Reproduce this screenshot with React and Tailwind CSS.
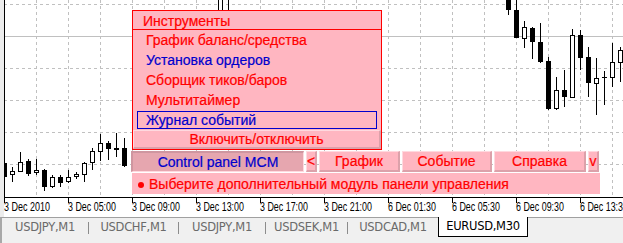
const CANDLES = [
  { x: 4, hi: 158, lo: 180, t: 163, b: 177, up: false },
  { x: 12, hi: 167, lo: 182, t: 171, b: 175, up: true },
  { x: 20, hi: 152, lo: 172, t: 162, b: 172, up: true },
  { x: 28, hi: 159, lo: 176, t: 161, b: 174, up: false },
  { x: 36, hi: 159, lo: 175, t: 170, b: 173, up: true },
  { x: 44, hi: 169, lo: 191, t: 170, b: 187, up: false },
  { x: 52, hi: 175, lo: 188, t: 177, b: 187, up: true },
  { x: 60, hi: 175, lo: 187, t: 177, b: 183, up: false },
  { x: 68, hi: 170, lo: 183, t: 177, b: 182, up: true },
  { x: 76, hi: 172, lo: 179, t: 174, b: 177, up: true },
  { x: 84, hi: 162, lo: 182, t: 163, b: 175, up: true },
  { x: 92, hi: 148, lo: 170, t: 151, b: 163, up: true },
  { x: 100, hi: 134, lo: 161, t: 143, b: 152, up: true },
  { x: 108, hi: 141, lo: 160, t: 143, b: 149, up: false },
  { x: 116, hi: 133, lo: 157, t: 148, b: 150, up: false },
  { x: 124, hi: 138, lo: 167, t: 148, b: 166, up: false },
  { x: 220, hi: -5, lo: 14, t: -5, b: 13, up: true },
  { x: 228, hi: -5, lo: 14, t: -20, b: -10, up: false },
  { x: 508, hi: -5, lo: 15, t: -5, b: 10, up: false },
  { x: 516, hi: -5, lo: 38, t: 10, b: 38, up: false },
  { x: 524, hi: 21, lo: 48, t: 27, b: 39, up: true },
  { x: 532, hi: 27, lo: 59, t: 28, b: 42, up: false },
  { x: 540, hi: 23, lo: 63, t: 42, b: 62, up: false },
  { x: 548, hi: 57, lo: 110, t: 61, b: 109, up: false },
  { x: 556, hi: 77, lo: 110, t: 90, b: 109, up: true },
  { x: 564, hi: 70, lo: 107, t: 90, b: 97, up: false },
  { x: 572, hi: 29, lo: 97, t: 35, b: 98, up: true },
  { x: 580, hi: 30, lo: 70, t: 35, b: 58, up: false },
  { x: 588, hi: 47, lo: 97, t: 57, b: 83, up: false },
  { x: 596, hi: 58, lo: 115, t: 78, b: 84, up: true },
  { x: 604, hi: 71, lo: 105, t: 77, b: 78, up: false },
  { x: 612, hi: 43, lo: 87, t: 62, b: 78, up: true },
  { x: 620, hi: 47, lo: 82, t: 50, b: 63, up: true },
];

const TICKS = [
  [4, '3 Dec 2010', 46],
  [68, '3 Dec 05:00', 48],
  [132, '3 Dec 09:00', 48],
  [196, '3 Dec 13:00', 48],
  [260, '3 Dec 17:00', 48],
  [324, '3 Dec 21:00', 48],
  [388, '6 Dec 01:30', 48],
  [452, '6 Dec 05:30', 48],
  [516, '6 Dec 09:30', 48],
  [580, '6 Dec 13:30', 48],
];

const GRID_X = Array.from({ length: 19 }, (_, i) => 36 + i * 32);
const GRID_Y = [4, 68, 100, 132, 164];

const TABS = [
  { name: 'USDJPY,M1', w: 'w-[86px]' },
  { name: 'USDCHF,M1', w: 'w-[89px]' },
  { name: 'USDJPY,M1', w: 'w-[86px]' },
  { name: 'USDSEK,M1', w: 'w-[81px]' },
  { name: 'USDCAD,M1', w: 'w-[90px]' },
];

const FONT = "font-['Liberation_Sans',Arial,sans-serif]";

function Chart() {
  return (
    <svg width="623" height="217" className="block">
      <rect x="0" y="0" width="623" height="217" fill="#fff" />
      {GRID_X.map((x) => (
        <line key={'gx' + x} x1={x + 0.5} y1={0} x2={x + 0.5} y2={197} stroke="#c0c0c0" strokeDasharray="3 3" />
      ))}
      {GRID_Y.map((y) => (
        <line key={'gy' + y} x1={4} y1={y + 0.5} x2={623} y2={y + 0.5} stroke="#c0c0c0" strokeDasharray="3 3" />
      ))}
      <line x1={4} y1={36.5} x2={623} y2={36.5} stroke="#c0c0c0" />

      {CANDLES.map((c) => (
        <g key={c.x}>
          <line x1={c.x + 0.5} x2={c.x + 0.5} y1={c.hi} y2={c.lo} stroke="#000" />
          {c.up ? (
            <rect x={c.x - 1.5} y={c.t + 0.5} width={4} height={Math.max(c.b - c.t - 1, 0)} fill="#fff" stroke="#000" />
          ) : (
            <rect x={c.x - 2} y={c.t} width={5} height={Math.max(c.b - c.t, 1)} fill="#000" />
          )}
        </g>
      ))}

      <line x1={4.5} y1={0} x2={4.5} y2={197} stroke="#000" />
      <line x1={4} y1={197.5} x2={623} y2={197.5} stroke="#000" />
      {TICKS.map(([x, label, len]) => (
        <g key={label}>
          <line x1={x + 0.5} y1={197} x2={x + 0.5} y2={203} stroke="#000" />
          <text
            x={x}
            y={211}
            fontFamily="'Liberation Sans', Arial, sans-serif"
            fontSize="12"
            textLength={len}
            lengthAdjust="spacingAndGlyphs"
            fill="#000"
          >
            {label}
          </text>
        </g>
      ))}
      <rect x="0" y="0" width="4" height="217" fill="#ececec" />
    </svg>
  );
}

function Btn({ w, pressed, children }) {
  return (
    <div
      className={
        pressed
          ? `${w} h-[21px] flex items-center justify-center bg-[#e6a6af] border-t-2 border-l-2 border-b border-r border-t-[#cf96a0] border-l-[#cf96a0] border-b-[#ffd9df] border-r-[#ffd9df] text-[#0000cd] text-[14px] leading-none`
          : `${w} h-[21px] flex items-center justify-center bg-[#ffb6c1] border-t border-l border-b-2 border-r-2 border-t-[#ffd9df] border-l-[#ffd9df] border-b-[#dca1aa] border-r-[#dca1aa] text-[#ff0000] text-[14px] leading-none`
      }
    >
      {children}
    </div>
  );
}

export default function App() {
  return (
    <div className={`w-[623px] h-[243px] overflow-hidden bg-white ${FONT}`}>
      <div className="relative h-[217px]">
        <Chart />

        <div className="absolute left-[132px] top-[10px] w-[250px] border border-[#ff0000] bg-[#ffb6c1] text-[14px] [-webkit-text-stroke:0.2px]">
          <div className="h-[19px] pt-[2px] pl-[10px] leading-[17px] text-[#ff0000] border-b border-[#ff0000]">
            Инструменты
          </div>
          <div className="h-[20px] pl-[13px] leading-[20px] text-[#ff0000]">График баланс/средства</div>
          <div className="h-[20px] pl-[13px] leading-[20px] text-[#0000cd]">Установка ордеров</div>
          <div className="h-[20px] pl-[13px] leading-[20px] text-[#ff0000]">Сборщик тиков/баров</div>
          <div className="h-[20px] pl-[13px] leading-[20px] text-[#ff0000]">Мультитаймер</div>
          <div className="h-[20px] px-[4px] pt-px">
            <div className="h-[18px] border border-[#0000cd] pl-[8px] leading-[16px] text-[#0000cd]">Журнал событий</div>
          </div>
          <div className="h-[19px] flex items-center justify-center border-t border-l border-b-2 border-r-2 border-t-[#ffd9df] border-l-[#ffd9df] border-b-[#dca1aa] border-r-[#dca1aa] text-[#ff0000] leading-none">
            Включить/отключить
          </div>
        </div>

        <div className="absolute left-[131px] top-[151px] flex flex-col gap-px [-webkit-text-stroke:0.2px]">
          <div className="flex gap-[2px]">
            <Btn w="w-[173px]" pressed>
              Control panel MCM
            </Btn>
            <Btn w="w-[11px]">&lt;</Btn>
            <Btn w="w-[81px]">График</Btn>
            <Btn w="w-[90px]">Событие</Btn>
            <Btn w="w-[92px]">Справка</Btn>
            <Btn w="w-[11px]">v</Btn>
          </div>
          <div className="ml-px w-[468px] h-[21px] bg-[#ffb6c1] flex items-center pl-[6px] gap-[5px] text-[14px] text-[#ff0000]">
            <div className="w-[6px] h-[6px] rounded-full bg-[#ff0000] mt-[2px]" />
            <span className="pt-[2px]">Выберите дополнительный модуль панели управления</span>
          </div>
        </div>
      </div>

      <div className="h-[26px] border-t border-[#a0a0a0] bg-[#f0f0f0] flex items-start border-l-2 border-l-[#a8a8a8] text-[11.5px] font-['DejaVu_Sans',sans-serif]">
        {TABS.map((tab, i) => (
          <div key={i} className="flex items-center">
            <div className={`${tab.w} h-[19px] flex items-center justify-center text-[#6a6a6a] tracking-[-0.3px]`}>{tab.name}</div>
            {i < TABS.length - 1 && <div className="w-px h-[12px] bg-[#8c8c8c]" />}
          </div>
        ))}
        <div className="w-[90px] h-[20px] -mt-px bg-white border border-t-0 border-black flex items-center justify-center text-black tracking-[-0.3px]">
          EURUSD,M30
        </div>
      </div>
    </div>
  );
}
